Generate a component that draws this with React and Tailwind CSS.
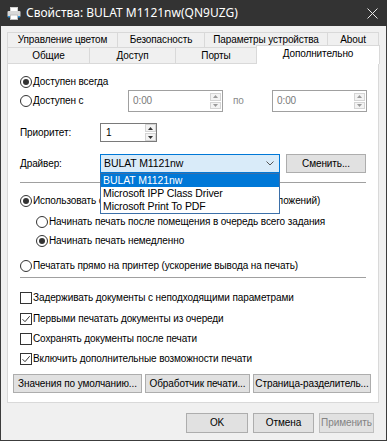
import React from "react";

function Radio({ checked }) {
  return (
    <span className="w-[12px] h-[12px] rounded-full border border-[#333333] bg-white flex items-center justify-center shrink-0">
      {checked && <span className="w-[6px] h-[6px] rounded-full bg-[#333333]" />}
    </span>
  );
}

function Check({ checked }) {
  return (
    <span className="w-[12px] h-[12px] border border-[#333333] bg-white flex items-center justify-center shrink-0">
      {checked && (
        <svg width="10" height="10" viewBox="0 0 10 10">
          <path d="M1.5 5.2 L4 7.7 L8.7 2.2" fill="none" stroke="#333333" strokeWidth="1" />
        </svg>
      )}
    </span>
  );
}

function Spin({ dim }) {
  const c = dim ? "#9a9a9a" : "#333333";
  return (
    <div className="flex flex-col w-[11px] h-full gap-px">
      <div className="flex-1 flex items-center justify-center bg-[#f3f3f3] border border-[#d4d4d4]">
        <svg width="5" height="3" viewBox="0 0 5 3"><path d="M0 3 L2.5 0 L5 3Z" fill={c} /></svg>
      </div>
      <div className="flex-1 flex items-center justify-center bg-[#f3f3f3] border border-[#d4d4d4]">
        <svg width="5" height="3" viewBox="0 0 5 3"><path d="M0 0 L2.5 3 L5 0Z" fill={c} /></svg>
      </div>
    </div>
  );
}

function TimeInput() {
  return (
    <div className="w-[95px] h-[22px] border border-[#a0a0a0] bg-white flex items-center pl-[4px] pr-[1px]">
      <span className="flex-1 text-[#7a7a7a]">0:00</span>
      <div className="h-[16px]"><Spin dim /></div>
    </div>
  );
}

function Btn({ children, className = "" }) {
  return (
    <div className={"h-[19px] bg-[#e1e1e1] border border-[#adadad] flex items-center justify-center whitespace-nowrap " + className}>
      {children}
    </div>
  );
}

function PrinterIcon() {
  return (
    <svg width="14" height="13" viewBox="0 0 14 13">
      <rect x="3.5" y="0.5" width="7" height="4" fill="#ffffff" stroke="#cfcfcf" />
      <rect x="0.5" y="4" width="13" height="6" rx="1" fill="#d8d8d8" />
      <rect x="1" y="9" width="12" height="1.5" fill="#2a8fd6" />
      <rect x="3.5" y="8" width="7" height="4.5" fill="#ffffff" stroke="#bdbdbd" />
    </svg>
  );
}

export default function App() {
  const tab = "flex items-center justify-center border-t border-l border-r border-[#d9d9d9] bg-[#f0f0f0] whitespace-nowrap";
  return (
    <div className="w-[387px] h-[441px] flex flex-col font-['Liberation_Sans',Arial,sans-serif] text-[10px] tracking-[-0.1px] leading-none text-black overflow-hidden">
      {/* Title bar */}
      <div className="h-[26px] shrink-0 bg-[#333333] flex items-center text-white tracking-normal">
        <div className="ml-[7px] w-[14px] flex items-center"><PrinterIcon /></div>
        <span className="ml-[5px] text-[12px] font-['Noto_Sans',sans-serif]">Свойства: BULAT M1121nw(QN9UZG)</span>
        <div className="ml-auto mr-[9px] flex items-center">
          <svg width="11" height="11" viewBox="0 0 11 11">
            <path d="M0.5 0.5 L10.5 10.5 M10.5 0.5 L0.5 10.5" stroke="#e8e8e8" strokeWidth="1" />
          </svg>
        </div>
      </div>

      {/* Body */}
      <div className="flex-1 flex flex-col bg-[#f0f0f0] border-x border-b border-[#3c3c3c] pl-[6px] pt-[6px]">
        {/* Tabs */}
        <div className="flex h-[15px] w-[372px]">
          <div className={tab + " w-[111px]"}>Управление цветом</div>
          <div className={tab + " w-[88px] -ml-px"}>Безопасность</div>
          <div className={tab + " w-[124px] -ml-px"}>Параметры устройства</div>
          <div className={tab + " w-[52px] -ml-px"}>About</div>
        </div>
        <div className="flex h-[16px] w-[374px] items-end">
          <div className={tab + " w-[83px] h-[16px]"}>Общие</div>
          <div className={tab + " w-[87px] h-[16px] -ml-px"}>Доступ</div>
          <div className={tab + " w-[82px] h-[16px] -ml-px"}>Порты</div>
          <div className="relative z-10 -ml-px -mb-px w-[124px] h-[19px] flex items-center justify-center bg-white border-t border-l border-r border-[#d9d9d9] pb-[2px]">
            Дополнительно
          </div>
        </div>

        {/* Panel */}
        <div className="w-[372px] h-[340px] border border-[#d9d9d9] bg-white flex flex-col">
          <div className="mt-[10px] h-[16px] pl-[12px] flex items-center gap-[1px]">
            <Radio checked />
            <span>Доступен всегда</span>
          </div>
          <div className="h-[22px] pl-[12px] flex items-center">
            <Radio />
            <span className="ml-[1px] w-[95px]">Доступен с</span>
            <TimeInput />
            <span className="ml-[10px] w-[39px] text-[#8a8a8a]">по</span>
            <TimeInput />
          </div>
          <div className="mt-[11px] h-[19px] pl-[12px] flex items-center">
            <span className="w-[80px]">Приоритет:</span>
            <div className="w-[57px] h-[19px] border border-[#7a7a7a] bg-white flex items-center pl-[5px]">
              <span className="flex-1">1</span>
              <div className="h-[17px]"><Spin /></div>
            </div>
          </div>
          <div className="mt-[12px] h-[19px] pl-[12px] flex items-center">
            <span className="w-[80px]">Драйвер:</span>
            <div className="relative z-20">
              <div className="w-[180px] h-[19px] border border-[#0078d7] bg-[#d9ebf9] flex items-center pl-[3px] pr-[5px]">
                <span className="flex-1 text-[10.5px]">BULAT M1121nw</span>
                <svg width="8" height="5" viewBox="0 0 8 5"><path d="M0.5 0.5 L4 4 L7.5 0.5" fill="none" stroke="#555555" strokeWidth="1" /></svg>
              </div>
              <div className="absolute left-0 top-full w-[180px] border border-[#3b6fa8] bg-white flex flex-col text-[10.5px]">
                <div className="h-[13px] bg-[#0078d7] text-white flex items-center pl-[2px]">BULAT M1121nw</div>
                <div className="h-[13px] flex items-center pl-[2px]">Microsoft IPP Class Driver</div>
                <div className="h-[13px] flex items-center pl-[2px]">Microsoft Print To PDF</div>
              </div>
            </div>
            <Btn className="ml-[6px] w-[80px]">Сменить...</Btn>
          </div>
          <div className="mt-[9px] ml-[12px] h-px w-[346px] bg-[#a0a0a0]" />
          <div className="mt-[10px] h-[16px] pl-[12px] flex items-center gap-[1px]">
            <Radio checked />
            <span>Использовать очередь печати (ускорение работы приложений)</span>
          </div>
          <div className="mt-[5px] h-[16px] pl-[28px] flex items-center gap-[1px]">
            <Radio />
            <span>Начинать печать после помещения в очередь всего задания</span>
          </div>
          <div className="mt-[3px] h-[16px] pl-[28px] flex items-center gap-[1px]">
            <Radio checked />
            <span>Начинать печать немедленно</span>
          </div>
          <div className="mt-[9px] h-[16px] pl-[12px] flex items-center gap-[1px]">
            <Radio />
            <span>Печатать прямо на принтер (ускорение вывода на печать)</span>
          </div>
          <div className="mt-[3px] ml-[12px] h-px w-[346px] bg-[#a0a0a0]" />
          <div className="mt-[12px] h-[16px] pl-[12px] flex items-center gap-[1px]">
            <Check />
            <span>Задерживать документы с неподходящими параметрами</span>
          </div>
          <div className="mt-[5px] h-[16px] pl-[12px] flex items-center gap-[1px]">
            <Check checked />
            <span>Первыми печатать документы из очереди</span>
          </div>
          <div className="mt-[4px] h-[16px] pl-[12px] flex items-center gap-[1px]">
            <Check />
            <span>Сохранять документы после печати</span>
          </div>
          <div className="mt-[4px] h-[16px] pl-[12px] flex items-center gap-[1px]">
            <Check checked />
            <span>Включить дополнительные возможности печати</span>
          </div>
          <div className="mt-[7px] pl-[5px] flex gap-[3px]">
            <Btn className="w-[129px]">Значения по умолчанию...</Btn>
            <Btn className="w-[105px]">Обработчик печати...</Btn>
            <Btn className="w-[118px]">Страница-разделитель...</Btn>
          </div>
        </div>

        {/* Bottom buttons */}
        <div className="mt-[10px] w-[367px] flex justify-end gap-[5px]">
          <Btn className="w-[62px] h-[20px] border-[#0078d7]">OK</Btn>
          <Btn className="w-[61px] h-[20px]">Отмена</Btn>
          <Btn className="w-[55px] h-[20px] bg-[#cccccc] border-[#bfbfbf] text-[#838383]">Применить</Btn>
        </div>
      </div>
    </div>
  );
}
